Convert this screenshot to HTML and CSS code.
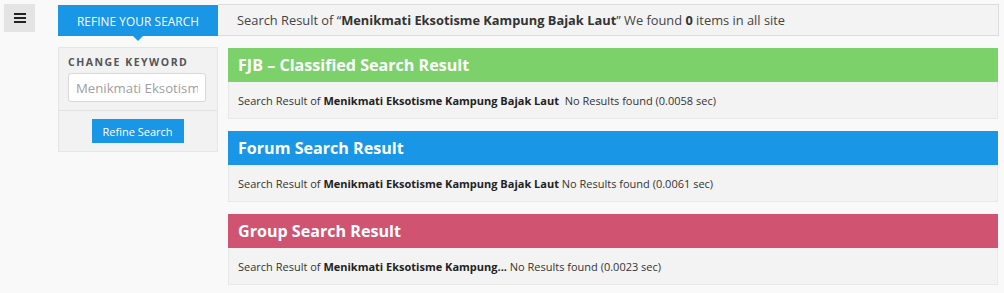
FILE: index.html
```html
<!DOCTYPE html>
<html>
<head>
<meta charset="utf-8">
<link rel="stylesheet" href="styles.css">
</head>
<body>
<div class="page">
  <div class="rail">
    <button class="menu-btn" aria-label="menu">
      <svg width="12" height="10" viewBox="0 0 12 10"><rect x="0" y="0" width="12" height="2" fill="#222"/><rect x="0" y="4" width="12" height="2" fill="#222"/><rect x="0" y="8" width="12" height="2" fill="#222"/></svg>
    </button>
  </div>
  <div class="main">
    <div class="top-row">
      <div class="tab">REFINE YOUR SEARCH</div>
      <div class="summary">Search Result of “<b>Menikmati Eksotisme Kampung Bajak Laut</b>” We found <b>0</b> items in all site</div>
    </div>
    <div class="content">
      <div class="refine-panel">
        <div class="refine-top">
          <div class="refine-label">CHANGE KEYWORD</div>
          <input class="refine-input" type="text" placeholder="Menikmati Eksotisme Kampung Bajak Laut">
        </div>
        <div class="refine-bottom">
          <button class="refine-btn">Refine Search</button>
        </div>
      </div>
      <div class="results">
        <div class="result">
          <div class="result-head green">FJB – Classified Search Result</div>
          <div class="result-body">Search Result of <b>Menikmati Eksotisme Kampung Bajak Laut</b> &nbsp;No Results found (0.0058 sec)</div>
        </div>
        <div class="result">
          <div class="result-head blue">Forum Search Result</div>
          <div class="result-body">Search Result of <b>Menikmati Eksotisme Kampung Bajak Laut</b> No Results found (0.0061 sec)</div>
        </div>
        <div class="result">
          <div class="result-head pink">Group Search Result</div>
          <div class="result-body">Search Result of <b>Menikmati Eksotisme Kampung...</b> No Results found (0.0023 sec)</div>
        </div>
      </div>
    </div>
  </div>
</div>
</body>
</html>
```
FILE: styles.css
```css
* { box-sizing: border-box; }
html, body { margin: 0; padding: 0; }
body {
  background: #f9f9f9;
  font-family: "Open Sans", "Noto Sans", sans-serif;
  color: #333;
  width: 1004px;
  height: 293px;
  overflow: hidden;
}
.page {
  display: flex;
  padding: 4px 0 0 4px;
}
.rail { width: 54px; flex: none; }
.menu-btn {
  width: 31px;
  height: 28px;
  border: none;
  background: #e4e4e4;
  display: flex;
  align-items: center;
  justify-content: center;
  padding: 0;
  margin: 0;
}
.main {
  width: 941px;
  display: flex;
  flex-direction: column;
}
.top-row {
  display: flex;
  height: 32px;
}
.tab {
  position: relative;
  width: 160px;
  flex: none;
  margin-top: 1px;
  height: 31px;
  background: #1a96e6;
  color: #fff;
  font-size: 11.8px;
  display: flex;
  align-items: center;
  justify-content: center;
  letter-spacing: 0.1px;
}
.tab::after {
  content: "";
  position: absolute;
  left: 75px;
  bottom: -5px;
  border-left: 5px solid transparent;
  border-right: 5px solid transparent;
  border-top: 5px solid #1a96e6;
}
.summary {
  flex: 1;
  background: #f3f3f3;
  border: 1px solid #dcdcdc;
  border-left: none;
  font-size: 12.85px;
  color: #444;
  padding-left: 19px;
  display: flex;
  align-items: center;
  white-space: pre;
}
.summary b { color: #333; font-weight: 700; }
.content {
  display: flex;
  margin-top: 11px;
  gap: 10px;
}
.refine-panel {
  width: 160px;
  flex: none;
  height: 105px;
  background: #f2f2f2;
  border: 1px solid #e6e6e6;
  display: flex;
  flex-direction: column;
}
.refine-top {
  padding: 8px 9px 0 9px;
  height: 63px;
  border-bottom: 1px solid #e2e2e2;
}
.refine-label {
  font-size: 10.5px;
  font-weight: 700;
  letter-spacing: 1.5px;
  color: #555;
  line-height: 12px;
}
.refine-input {
  margin-top: 5px;
  width: 138px;
  height: 29px;
  border: 1px solid #d8d8d8;
  border-radius: 3px;
  background: #fff;
  font-family: "Open Sans", sans-serif;
  font-size: 13.2px;
  padding: 0 7px;
  outline: none;
}
.refine-input::placeholder { color: #a0a0a0; }
.refine-bottom {
  display: flex;
  justify-content: center;
  padding-top: 8px;
}
.refine-btn {
  width: 92px;
  height: 24px;
  border: none;
  background: #1a96e6;
  color: #fff;
  font-family: "Open Sans", sans-serif;
  font-size: 11px;
  padding: 0;
  margin-left: -1px;
}
.results {
  width: 770px;
  display: flex;
  flex-direction: column;
  gap: 12px;
  margin-top: 1px;
}
.result-head {
  height: 34px;
  color: #fff;
  font-size: 16.1px;
  font-weight: 700;
  padding-left: 10px;
  padding-bottom: 1px;
  display: flex;
  align-items: center;
}
.green { background: #7dd16a; }
.blue { background: #1a96e6; }
.pink { background: #d05472; }
.result-body {
  height: 37px;
  background: #f3f3f3;
  border: 1px solid #e8e8e8;
  border-top: none;
  font-size: 11px;
  color: #333;
  padding-left: 9px;
  display: flex;
  align-items: center;
  white-space: pre;
}
.result-body b { font-weight: 700; color: #222; }
```
